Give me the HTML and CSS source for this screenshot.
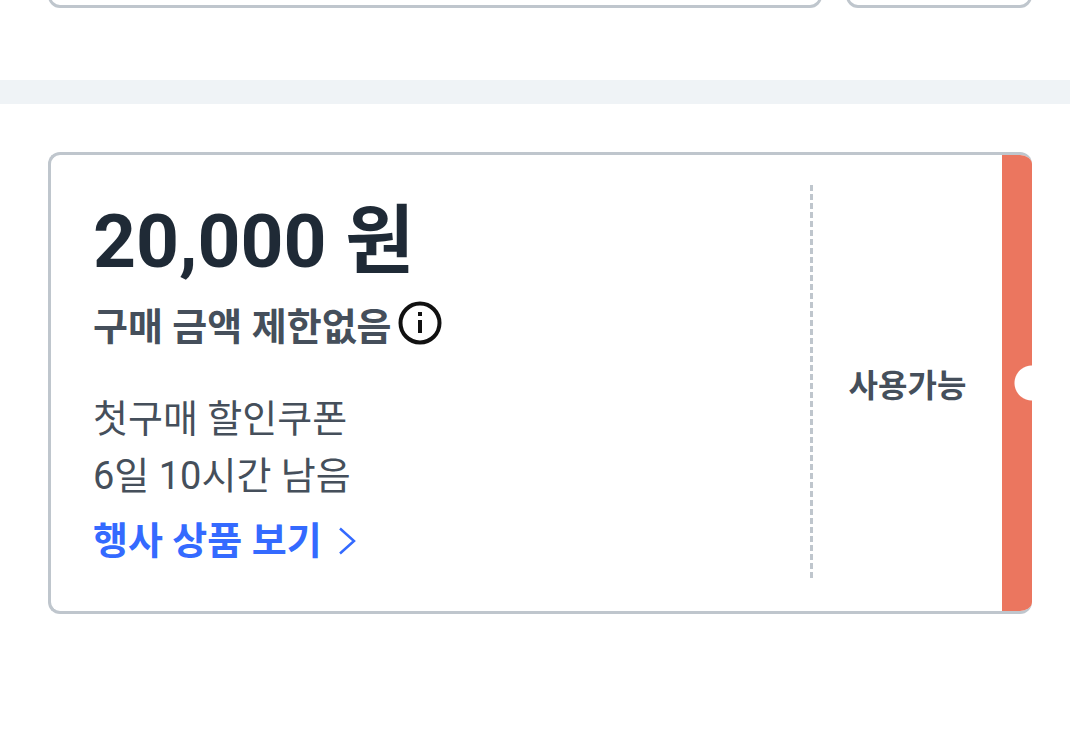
FILE: index.html
```
<!DOCTYPE html>
<html lang="ko">
<head>
  <meta charset="UTF-8">
  <meta name="viewport" content="width=device-width, initial-scale=1.0">
  <title>쿠폰</title>
  <link rel="stylesheet" href="styles.css">
</head>
<body>
  <form class="register">
    <input class="register__input" type="text" aria-label="쿠폰 번호">
    <button class="register__button" type="button" aria-label="쿠폰 등록"></button>
  </form>

  <main class="coupons">
    <article class="coupon">
      <div class="coupon__info">
        <h2 class="coupon__amount">20,000 원</h2>
        <div class="coupon__condition">
          <span>구매 금액 제한없음</span>
          <button class="coupon__help" type="button" aria-label="자세히">
            <svg width="44" height="44" viewBox="0 0 44 44">
              <circle cx="22" cy="22" r="19.5" fill="none" stroke="#111" stroke-width="4" />
              <path d="M20 11h4v4h-4zM20 19h4v13h-4z" fill="#111" />
            </svg>
          </button>
        </div>
        <p class="coupon__text">첫구매 할인쿠폰</p>
        <p class="coupon__text">6일 10시간 남음</p>
        <a class="coupon__link" href="#">
          <span>행사 상품 보기</span>
          <svg width="18" height="30" viewBox="0 0 18 30">
            <path d="M2 2.500L16 15L2 27.500" fill="none" stroke="#346aff" stroke-width="2.500" />
          </svg>
        </a>
      </div>
      <div class="coupon__divider"></div>
      <div class="coupon__status">사용가능</div>
      <div class="coupon__edge"></div>
    </article>
  </main>
</body>
</html>
```
FILE: styles.css
```
:root {
  --line: #bfc6cd;
  --text: #454f5b;
  --accent: #eb765f;
}
* { box-sizing: border-box; }
body {
  margin: 0;
  font-family: Roboto, 'Noto Sans CJK KR', sans-serif;
  color: var(--text);
  background: #fff;
}
h2, p { margin: 0; }
button {
  padding: 0;
  background: none;
  cursor: pointer;
}

/* only the bottom edge of the form shows */
.register {
  display: flex;
  align-items: flex-end;
  gap: 24px;
  height: 80px;
  padding: 0 38px 72px 48px;
  overflow: hidden;
}
.register__input,
.register__button {
  height: 96px;
  border: 3px solid var(--line);
  border-radius: 12px;
  background: #fff;
}
.register__input {
  flex: 1;
  min-width: 0;
  padding: 0 24px;
  font: inherit;
}
.register__button { width: 186px; }

.coupons {
  padding: 48px 38px 48px 48px;
  border-top: 24px solid #eff3f6;
}
.coupon {
  display: flex;
  border: 3px solid var(--line);
  border-right: 0;
  border-radius: 12px;
  overflow: hidden;
}
.coupon__info {
  flex: 1;
  padding: 42px;
}
.coupon__amount {
  font-size: 75px;
  font-weight: 700;
  line-height: 88px;
  color: #1f2a36;
}
.coupon__condition {
  display: flex;
  align-items: flex-start;
  gap: 6px;
  margin: 14px 0 36px;
  font-size: 38px;
  font-weight: 700;
  line-height: 56px;
}
.coupon__help {
  display: flex;
  padding-top: 2px;
  border: 0;
}
.coupon__text {
  font-size: 38px;
  line-height: 57px;
}
.coupon__link {
  display: flex;
  align-items: center;
  gap: 16px;
  margin-top: 8px;
  font-size: 38px;
  font-weight: 700;
  line-height: 56px;
  color: #346aff;
  text-decoration: none;
}
.coupon__divider {
  width: 3px;
  margin: 30px 0;
  background: repeating-linear-gradient(var(--line) 0 6px, transparent 6px 9px);
}
.coupon__status {
  display: flex;
  align-items: center;
  justify-content: center;
  width: 189px;
  font-size: 32px;
  font-weight: 700;
}
.coupon__edge {
  width: 30px;
  background: radial-gradient(circle at 100% 50%, #fff 17px, var(--accent) 18px);
}
```
